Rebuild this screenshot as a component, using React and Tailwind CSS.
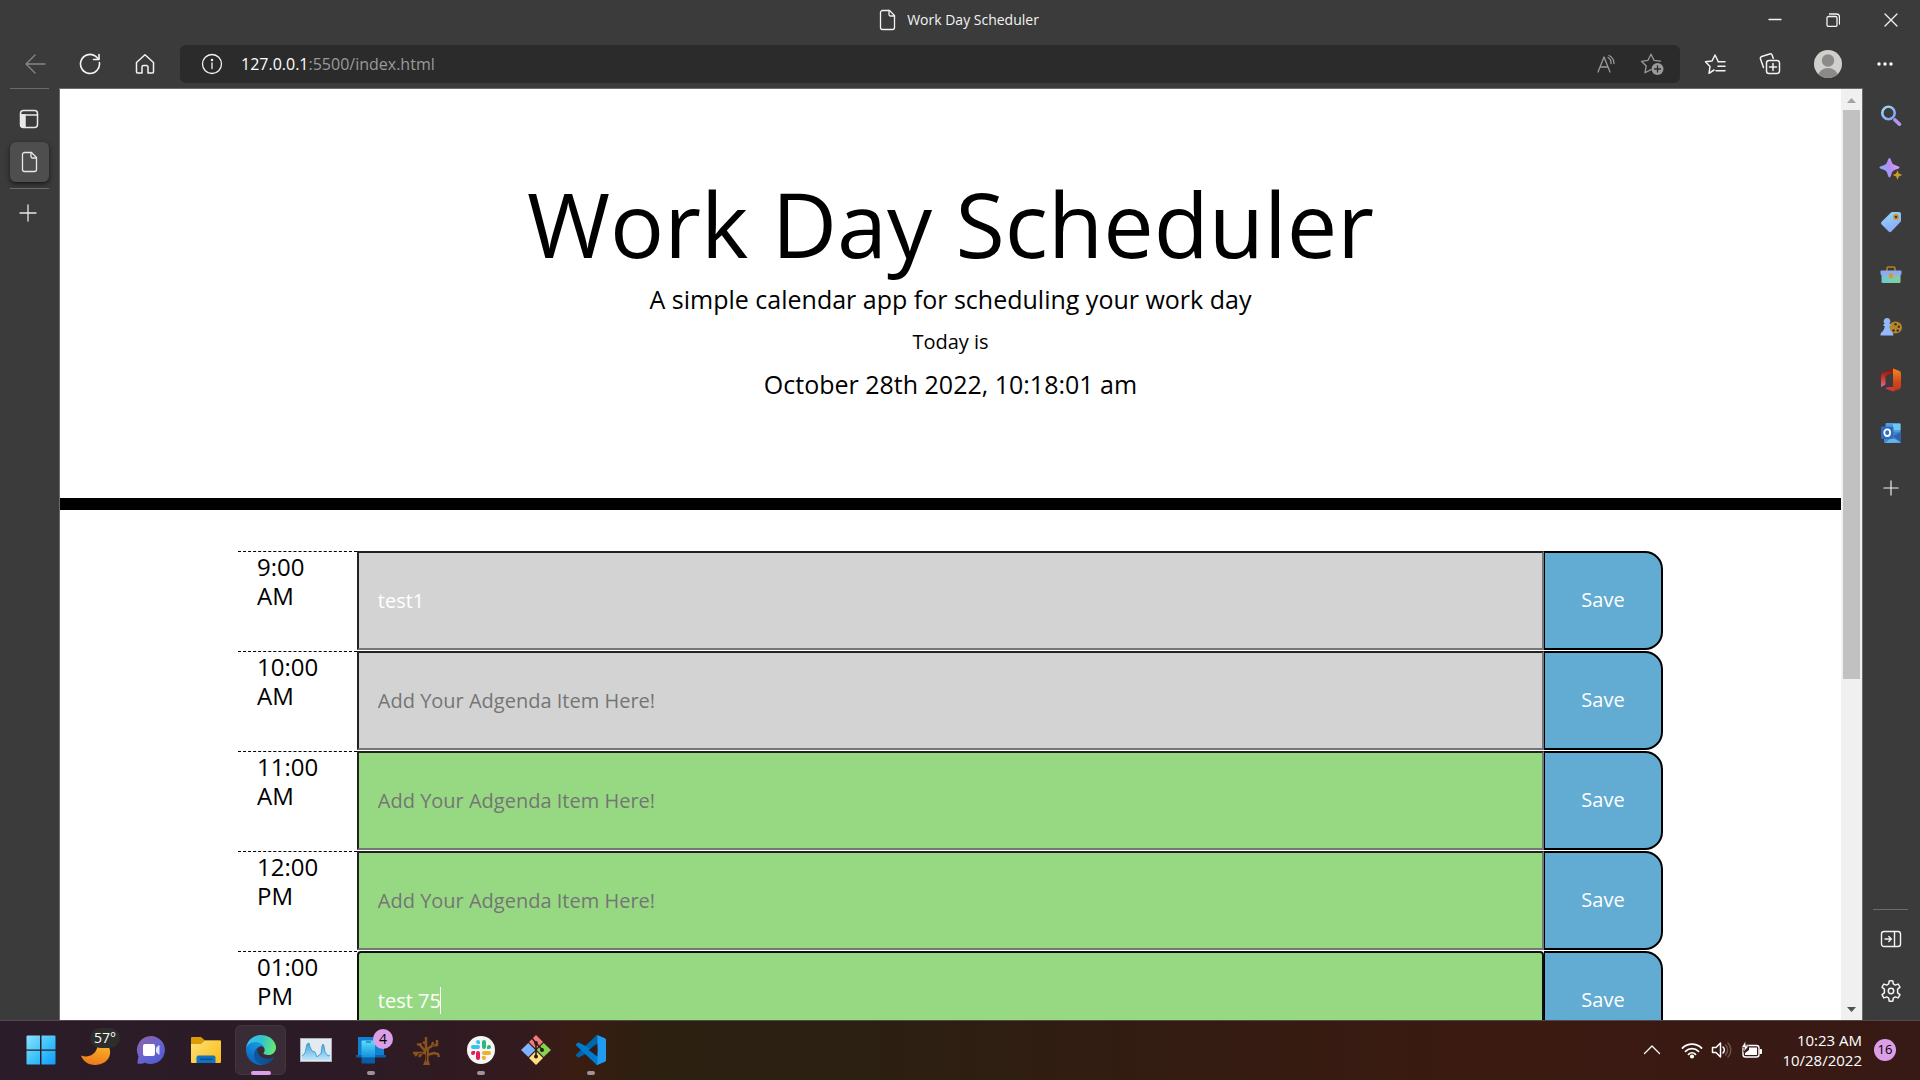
import React from "react";

/* ---------- browser chrome icons ---------- */

const Line = ({ size = 22, className = "", children, sw = 1.3, box }) => (
  <svg
    width={size}
    height={size}
    viewBox={box || `0 0 ${size} ${size}`}
    fill="none"
    stroke="currentColor"
    strokeWidth={sw}
    strokeLinecap="round"
    strokeLinejoin="round"
    className={"shrink-0 " + className}
    aria-hidden="true"
  >
    {children}
  </svg>
);

const PageIcon = () => (
  <Line size={22}>
    <path d="M5.5 1.5h7l5 5v12a2 2 0 0 1-2 2h-10a2 2 0 0 1-2-2v-15a2 2 0 0 1 2-2z" />
    <path d="M12 1.5v4a1.5 1.5 0 0 0 1.500 1.500h4" />
  </Line>
);
const BackIcon = () => (
  <Line size={22}>
    <path d="M21 11H2M11 2 2 11l9 9" />
  </Line>
);
const ReloadIcon = () => (
  <Line size={22} sw={1.6}>
    <path d="M20.400 9.500A9.500 9.500 0 1 1 16.500 3.200L19.500 6" />
    <path d="M20 1.500V6.500H14.500" />
  </Line>
);
const HomeIcon = () => (
  <Line size={22} sw={1.5}>
    <path d="M2.500 9.500 11 1.800l8.500 7.700v9.500a1 1 0 0 1-1 1h-4.500v-6a1.500 1.500 0 0 0-1.500-1.500h-3A1.500 1.500 0 0 0 8 14v6H3.500a1 1 0 0 1-1-1z" />
  </Line>
);
const InfoIcon = () => (
  <Line size={22}>
    <circle cx="11" cy="11" r="9.500" />
    <path d="M11 10v5.500" />
    <circle cx="11" cy="7" r=".6" fill="currentColor" />
  </Line>
);
const ReadAloudIcon = () => (
  <Line size={22}>
    <path d="M2 19 8 4l6 15M4 14h8M12 4.500a6 6 0 0 1 3 6M13 2.500a9 9 0 0 1 5 8" />
  </Line>
);
const AddFavIcon = () => (
  <Line size={24} box="0 0 24 24">
    <path d="M11 17.600 5 20.800 6.200 14 1.500 9.300 8 8.300 11 2.200 14 8.300 20.500 9.200" />
    <circle cx="17.500" cy="17" r="6" fill="currentColor" stroke="none" />
    <path d="M17.500 14v6M14.500 17h6" stroke="#2b2b2b" />
  </Line>
);
const FavsIcon = () => (
  <Line size={22} sw={1.5}>
    <path d="M10 17 5 20.300 6 13.500 1.500 8.800 8 8 11 2l3 6M14 8.800h7M14 13.300h7M12 17.800h9" />
  </Line>
);
const CollectionsIcon = () => (
  <Line size={22} sw={1.5}>
    <path d="M4.500 14.500 1.500 6a2 2 0 0 1 1.200-2.500l8-2.500a2 2 0 0 1 2.500 1.200l1 3" />
    <rect x="7.500" y="7.500" width="13" height="13" rx="2.500" />
    <path d="M14 10.500v7M10.500 14h7" />
  </Line>
);
const DotsIcon = () => (
  <svg width="18" height="6" viewBox="0 0 18 6" fill="#fff" aria-hidden="true">
    <circle cx="3" cy="3" r="1.700" />
    <circle cx="9" cy="3" r="1.700" />
    <circle cx="15" cy="3" r="1.700" />
  </svg>
);
const AvatarIcon = () => (
  <svg width="28" height="28" viewBox="0 0 28 28" aria-hidden="true">
    <clipPath id="avatarClip">
      <circle cx="14" cy="14" r="14" />
    </clipPath>
    <g clipPath="url(#avatarClip)">
      <rect width="28" height="28" fill="#d0cfcb" />
      <circle cx="14" cy="10.500" r="6.200" fill="#8b8a88" />
      <ellipse cx="14" cy="26.500" rx="10" ry="8.500" fill="#8b8a88" />
    </g>
  </svg>
);
const TabsPaneIcon = () => (
  <Line size={20} sw={1.5}>
    <rect x="1.500" y="1.500" width="17" height="17" rx="3" />
    <path d="M1.500 6h17" />
    <path d="M2 6h4v12H4a2 2 0 0 1-2-2z" fill="currentColor" />
  </Line>
);
const PlusIcon = ({ size = 18 }) => (
  <Line size={size} box="0 0 18 18">
    <path d="M9 1v16M1 9h16" />
  </Line>
);

/* ---------- right sidebar icons ---------- */

const SearchIcon = () => (
  <svg width="22" height="22" viewBox="0 0 22 22" fill="none" aria-hidden="true">
    <defs>
      <linearGradient id="lens" x1="1" y1="1" x2="14" y2="14" gradientUnits="userSpaceOnUse">
        <stop stopColor="#9fe0f6" />
        <stop offset="1" stopColor="#7fa0f5" />
      </linearGradient>
    </defs>
    <path d="m15 15 4.500 4.200" stroke="#b693ee" strokeWidth="3.600" strokeLinecap="round" />
    <circle cx="8.500" cy="8" r="6.200" stroke="url(#lens)" strokeWidth="2.600" />
  </svg>
);
const SparkleIcon = () => (
  <svg width="24" height="24" viewBox="0 0 24 24" aria-hidden="true">
    <defs>
      <linearGradient id="spark" x1="1" y1="12" x2="20" y2="6" gradientUnits="userSpaceOnUse">
        <stop stopColor="#7fb0f8" />
        <stop offset=".5" stopColor="#b48df2" />
        <stop offset="1" stopColor="#d7a4f5" />
      </linearGradient>
    </defs>
    <path d="M10.500 1c1.500 0 1.800 4.500 3.500 6s6.500 2 6.500 3.500-4.800 1.800-6.500 3.500-2 6.500-3.500 6.500-1.800-4.800-3.500-6.500S.5 12 .5 10.500 5.300 8.700 7 7s2-6 3.500-6z" fill="url(#spark)" />
    <path d="M18.500 13.500c.6 0 .7 2.400 1.400 3.100s3.100.8 3.100 1.400-2.400.7-3.100 1.400-.8 3.100-1.400 3.100-.7-2.400-1.400-3.100-3.100-.8-3.100-1.400 2.400-.7 3.100-1.400.8-3.100 1.400-3.100z" fill="#cf9c22" />
  </svg>
);
const TagIcon = () => (
  <svg width="22" height="22" viewBox="0 0 22 22" aria-hidden="true">
    <defs>
      <linearGradient id="tag" x1="4" y1="2" x2="12" y2="20" gradientUnits="userSpaceOnUse">
        <stop stopColor="#93d8f5" />
        <stop offset="1" stopColor="#8ca8fb" />
      </linearGradient>
    </defs>
    <path d="M12.500 1H19a2 2 0 0 1 2 2v6.500a2 2 0 0 1-.6 1.500l-9 9.500a2 2 0 0 1-2.800 0l-7-7a2 2 0 0 1 0-2.800L11 1.600a2 2 0 0 1 1.500-.6z" fill="url(#tag)" />
    <circle cx="16" cy="6" r="2.100" fill="#3b3b3b" stroke="#cf9320" strokeWidth="1.600" />
  </svg>
);
const ToolboxIcon = () => (
  <svg width="22" height="22" viewBox="0 0 22 22" aria-hidden="true">
    <defs>
      <linearGradient id="toolbox" x1="1" y1="12" x2="21" y2="14" gradientUnits="userSpaceOnUse">
        <stop stopColor="#6cc6d4" />
        <stop offset="1" stopColor="#86cf9b" />
      </linearGradient>
    </defs>
    <path d="M7 7V4.500A1.500 1.500 0 0 1 8.500 3h5A1.500 1.500 0 0 1 15 4.500V7" fill="none" stroke="#b5801e" strokeWidth="1.600" />
    <rect x="1.500" y="9" width="19" height="10" rx="1" fill="url(#toolbox)" />
    <path d="M1 6.500h20a.5.5 0 0 1 .5.5v2.500a2 2 0 0 1-2 2h-17a2 2 0 0 1-2-2V7a.5.5 0 0 1 .5-.5z" fill="#8fa9f3" />
    <path d="M9 9.500h4v3a2 2 0 0 1-4 0z" fill="#d49d2a" />
  </svg>
);
const GamesIcon = () => (
  <svg width="22" height="22" viewBox="0 0 22 22" aria-hidden="true">
    <ellipse cx="15.500" cy="11.500" rx="6.500" ry="6" fill="#b5862a" />
    <g fill="#3a3226">
      <circle cx="15.500" cy="8.300" r="1.200" />
      <circle cx="18.800" cy="10.800" r="1.200" />
      <circle cx="17.700" cy="14.500" r="1.200" />
      <circle cx="13.500" cy="14.500" r="1.200" />
    </g>
    <path d="M7 2a3.400 3.400 0 0 1 2.200 6h1.300v2H9.300c.2 2.600 1 4.500 3 6.300.8.700 1 1.500 1 3.200H.5c0-1.700.2-2.500 1.200-3.200 2-1.500 2.800-3.700 3-6.300H3.500V8h1.300A3.400 3.400 0 0 1 7 2z" fill="#95b8fb" />
  </svg>
);
const OfficeIcon = () => (
  <svg width="22" height="24" viewBox="0 0 22 24" aria-hidden="true">
    <defs>
      <linearGradient id="offL" x1="3" y1="2" x2="3" y2="20" gradientUnits="userSpaceOnUse">
        <stop stopColor="#97130e" />
        <stop offset=".6" stopColor="#d8463e" />
        <stop offset="1" stopColor="#dd75c3" />
      </linearGradient>
      <linearGradient id="offR" x1="17" y1="1" x2="17" y2="23" gradientUnits="userSpaceOnUse">
        <stop stopColor="#ee8a1c" />
        <stop offset=".6" stopColor="#d3461c" />
        <stop offset="1" stopColor="#b83a1a" />
      </linearGradient>
    </defs>
    <path d="M13.500.5 3 4.500Q1 5.300 1 7.500V19l4.500-2.500V8.500q0-1 1-1.500l7-2.500z" fill="url(#offL)" />
    <path d="m13 .5 6 2.300Q21 3.500 21 5.500v13q0 2-2 2.700l-6 2.300z" fill="url(#offR)" />
    <path d="m5 20.500 3-1.500h5.500v4.600z" fill="#d9363c" />
  </svg>
);
const OutlookIcon = () => (
  <svg width="22" height="22" viewBox="0 0 22 22" aria-hidden="true">
    <rect x="5.500" y="1" width="15" height="13" rx="1" fill="#4f9fe0" />
    <path d="M13 2h7.500v6H13z" fill="#72c4f2" />
    <path d="M4 10h17v10a1 1 0 0 1-1 1H5a1 1 0 0 1-1-1z" fill="#3f86d0" />
    <path d="m13 14 8-4v10.500z" fill="#2f62a8" />
    <path d="M5 21 21 20.500 12 15.500z" fill="#65b6ea" />
    <rect x="1" y="4.500" width="12.500" height="12.500" rx="1.300" fill="#2f6cc0" />
    <ellipse cx="7.200" cy="10.700" rx="2.900" ry="3.300" fill="none" stroke="#fff" strokeWidth="1.800" />
  </svg>
);
const HidePaneIcon = () => (
  <Line size={22} sw={1.400}>
    <rect x="1.500" y="3.500" width="19" height="15" rx="2.500" />
    <path d="M14.500 3.500v15M5 11h6M8.800 8.500 11.300 11l-2.500 2.500" />
  </Line>
);
const GearIcon = () => (
  <Line size={24} sw={1.500} box="0 0 24 24">
    <path d="M9.700 4.900 10.200 2q1.800-.4 3.600 0l.5 2.900 2 1.200 2.700-1q1.300 1.400 1.900 3.200l-2.300 1.900v3.600l2.300 1.900q-.6 1.800-1.900 3.200l-2.700-1-2 1.200-.5 2.900q-1.800.4-3.600 0l-.5-2.900-2-1.200-2.700 1q-1.300-1.400-1.900-3.200l2.300-1.900v-3.600L3.100 8.300Q3.700 6.500 5 5.100l2.700 1z" />
    <circle cx="12" cy="12" r="2.700" />
  </Line>
);

/* ---------- taskbar icons ---------- */

const WindowsIcon = () => (
  <svg width="30" height="30" viewBox="0 0 30 30" aria-hidden="true">
    <defs>
      <linearGradient id="win" x1="0" y1="0" x2="30" y2="30" gradientUnits="userSpaceOnUse">
        <stop stopColor="#8fe3fd" />
        <stop offset=".5" stopColor="#41c4fb" />
        <stop offset="1" stopColor="#0c9bfa" />
      </linearGradient>
    </defs>
    <path d="M1.500.5H14v14H.5v-13a1 1 0 0 1 1-1zM15.500.5h13a1 1 0 0 1 1 1v13h-14zM.5 15.800H14v13.700H1.500a1 1 0 0 1-1-1zM15.500 15.800h14v12.700a1 1 0 0 1-1 1h-13z" fill="url(#win)" />
  </svg>
);
const MoonIcon = () => (
  <svg width="32" height="32" viewBox="0 0 32 32" aria-hidden="true">
    <defs>
      <linearGradient id="moon" x1="18" y1="8" x2="14" y2="31" gradientUnits="userSpaceOnUse">
        <stop stopColor="#fbb829" />
        <stop offset="1" stopColor="#ec7a1c" />
      </linearGradient>
    </defs>
    <path d="M1 21.500C11 25 19 18 18 6c9 2 13 8 12 14-1 7-8 11-15 11C8 31 3 27 1 21.500z" fill="url(#moon)" />
  </svg>
);
const ChatIcon = () => (
  <svg width="30" height="30" viewBox="0 0 30 30" aria-hidden="true">
    <defs>
      <linearGradient id="chat" x1="4" y1="3" x2="24" y2="28" gradientUnits="userSpaceOnUse">
        <stop stopColor="#8b62a8" />
        <stop offset=".5" stopColor="#6a64cf" />
        <stop offset="1" stopColor="#4f5bd5" />
      </linearGradient>
    </defs>
    <path d="M15 1a14 14 0 1 1-6 26.700c-2 1-5 1.300-7.500.8C1.500 26 2 24 2.500 21.500A14 14 0 0 1 15 1z" fill="url(#chat)" />
    <rect x="7" y="9" width="12" height="12" rx="2" fill="#fff" />
    <path d="m20 13 2.500-2.500q1-.6 1 .5v8q0 1-1 .5L20 17z" fill="#dde3ff" />
  </svg>
);
const FolderIcon = () => (
  <svg width="32" height="28" viewBox="0 0 32 28" aria-hidden="true">
    <defs>
      <linearGradient id="fold" x1="4" y1="6" x2="26" y2="27" gradientUnits="userSpaceOnUse">
        <stop stopColor="#fddd70" />
        <stop offset="1" stopColor="#fbbf20" />
      </linearGradient>
    </defs>
    <path d="M1 2a1 1 0 0 1 1-1h9l4 3.500h15a1 1 0 0 1 1 1V12H1z" fill="#dd9a08" />
    <path d="M1 8h10l4-3.500h15a1 1 0 0 1 1 1V26a1 1 0 0 1-1 1H2a1 1 0 0 1-1-1z" fill="url(#fold)" />
    <path d="M6.500 27v-5.500a2 2 0 0 1 2-2h15a2 2 0 0 1 2 2V27z" fill="#0e73c4" />
    <path d="M10 23.200h12.500" stroke="#063f7b" />
  </svg>
);
const EdgeIcon = () => (
  <svg width="30" height="30" viewBox="0 0 256 256" aria-hidden="true">
    <defs>
      <linearGradient id="edgeA" x1="60" y1="180" x2="240" y2="180" gradientUnits="userSpaceOnUse">
        <stop stopColor="#0c59a4" />
        <stop offset="1" stopColor="#114a8b" />
      </linearGradient>
      <linearGradient id="edgeB" x1="150" y1="70" x2="45" y2="230" gradientUnits="userSpaceOnUse">
        <stop stopColor="#1b9de2" />
        <stop offset=".5" stopColor="#1484d6" />
        <stop offset="1" stopColor="#0a65b8" />
      </linearGradient>
      <linearGradient id="edgeC" x1="20" y1="60" x2="250" y2="110" gradientUnits="userSpaceOnUse">
        <stop stopColor="#35c1f1" />
        <stop offset=".45" stopColor="#2fc2cf" />
        <stop offset="1" stopColor="#66eb6e" />
      </linearGradient>
    </defs>
    <path fill="url(#edgeA)" d="M231 190.500c-3.400 1.800-6.900 3.400-10.500 4.700-11.500 4.300-23.600 6.500-35.900 6.500-47.300 0-88.500-32.500-88.500-74.300.1-11.400 6.400-21.900 16.400-27.300-42.800 1.800-53.800 46.400-53.800 72.500 0 73.900 68.100 81.400 82.800 81.400 7.900 0 19.800-2.300 27-4.600l1.300-.4c27.600-9.500 51-28.100 66.600-52.800 1.200-1.900.6-4.300-1.200-5.500-1.300-.8-2.900-.9-4.200-.2z" />
    <path fill="url(#edgeB)" d="M105.700 241.400c-8.900-5.500-16.600-12.800-22.700-21.300-26.300-36-18.400-86.500 17.600-112.800 3.800-2.700 7.700-5.200 11.900-7.200 3.100-1.500 8.400-4.100 15.500-4 10.100.1 19.600 4.900 25.700 13 4 5.400 6.300 11.900 6.400 18.700 0-.2 24.500-79.600-80-79.600-43.900 0-80 41.700-80 78.200-.2 19.300 4 38.500 12.100 56 27.600 58.800 94.800 87.600 156.400 67.100-21.100 6.600-44.100 3.700-62.900-8.100z" />
    <path fill="url(#edgeC)" d="M152.300 148.900c-.8 1-3.300 2.500-3.300 5.700 0 2.600 1.700 5.100 4.700 7.200 14.400 10 41.500 8.700 41.600 8.700 10.700 0 21.100-2.900 30.300-8.300 18.800-11 30.400-31.100 30.400-52.900.3-22.400-8-37.300-11.300-43.900C223.500 23.900 177.700 0 128 0 58 0 1 56.200 0 126.200c.5-36.500 36.800-66 80-66 3.500 0 23.500.3 42 10.100 16.300 8.600 24.900 18.900 30.800 29.200 6.200 10.700 7.300 24.100 7.300 29.500 0 5.300-2.700 13.300-7.800 19.900z" />
  </svg>
);
const MonitorIcon = () => (
  <svg width="32" height="24" viewBox="0 0 32 24" aria-hidden="true">
    <defs>
      <linearGradient id="mon" x1="0" y1="6" x2="0" y2="22" gradientUnits="userSpaceOnUse">
        <stop stopColor="#4aa6dc" />
        <stop offset="1" stopColor="#bfe5f8" />
      </linearGradient>
    </defs>
    <rect x=".5" y=".5" width="31" height="23" fill="#e3ebf1" stroke="#a9b1b8" />
    <path d="M2 22v-4l3-3 2-9 2-1 1 4 2 4 3 1 2 5 2-2 2-1 1-8 1-2 1 2 1 6 3 4 2-1v5z" fill="url(#mon)" />
    <path d="m2 18 3-3 2-9 2-1 1 4 2 4 3 1 2 5 2-2 2-1 1-8 1-2 1 2 1 6 3 4 2-1" fill="none" stroke="#3a9bd4" strokeWidth=".9" />
  </svg>
);
const PhoneLinkIcon = () => (
  <svg width="30" height="28" viewBox="0 0 30 28" aria-hidden="true">
    <defs>
      <linearGradient id="ph" x1="0" y1="4" x2="0" y2="28" gradientUnits="userSpaceOnUse">
        <stop stopColor="#5fe0fb" />
        <stop offset=".7" stopColor="#1493e0" />
        <stop offset=".75" stopColor="#0b5ba8" />
      </linearGradient>
    </defs>
    <path d="M2 1h26v18H2z" fill="#1180cf" />
    <path d="M0 19h30v1.500a1 1 0 0 1-1 1H1a1 1 0 0 1-1-1z" fill="#0b5fae" />
    <rect x="5.500" y="4.500" width="13.500" height="23" rx="1" fill="url(#ph)" />
    <path d="M10 6h5" stroke="#0b5ba8" />
  </svg>
);
const TreeIcon = () => (
  <svg width="28" height="30" viewBox="0 0 28 30" fill="none" stroke="#8a531c" aria-hidden="true">
    <path d="M14 17 8.500 10.500 5 9M8.500 10.500 8.500 8M14 18H1M6 18 3 21M10 18 7 22M15 20l7-2 4 1 1 3M15 14l5-3 5-1V5M20 11l1-4M14 14V2M14 9l-3-2" strokeWidth="2.400" />
    <path d="M11 30h7l-1.500-5 .5-12h-4l.5 11z" fill="#8a531c" stroke="none" />
    <path d="M14.500 27V16M11 18.500H6M20 11h3" stroke="#4f2e10" />
  </svg>
);
const SlackIcon = () => (
  <svg width="28" height="28" viewBox="-14 -14 28 28" aria-hidden="true">
    <circle r="14" fill="#f6f6f6" />
    <g fill="#36c5f0">
      <rect x="-10" y="-5" width="9" height="4" rx="2" />
      <path d="M-1-6h-2a2 2 0 1 1 2-2z" />
    </g>
    <g fill="#2eb67d">
      <rect x="1" y="-10" width="4" height="9" rx="2" />
      <path d="M6-1v-2a2 2 0 1 1 2 2z" />
    </g>
    <g fill="#e01e5a">
      <rect x="-5" y="1" width="4" height="9" rx="2" />
      <path d="M-6 1v2a2 2 0 1 1-2-2z" />
    </g>
    <g fill="#ecb22e">
      <rect x="1" y="1" width="9" height="4" rx="2" />
      <path d="M1 6h2a2 2 0 1 1-2 2z" />
    </g>
  </svg>
);
const GitIcon = () => (
  <svg width="30" height="30" viewBox="0 0 30 30" aria-hidden="true">
    <path d="m15 0 7 7-7 7-7-7z" fill="#f37c77" />
    <path d="m7.300 8 7 7-7 7-7.300-7z" fill="#80b3ff" />
    <path d="m22.700 8 7.300 7-7.300 7-7-7z" fill="#86d34f" />
    <path d="m15 16 7 7-7 7-7-7z" fill="#ffe27f" />
    <path d="m10 2 5 6v14M15 8l6 6.500" fill="none" stroke="#2b1a1c" strokeWidth="1.600" />
    <g fill="#2b1a1c">
      <circle cx="15" cy="8" r="1.900" />
      <circle cx="21" cy="15" r="2" />
      <circle cx="15" cy="21.500" r="2" />
    </g>
  </svg>
);
const CodeIcon = () => (
  <svg width="30" height="30" viewBox="0 0 30 30" aria-hidden="true">
    <path d="M21.500.3 29 3.800a1.700 1.700 0 0 1 1 1.600v3L3.200 22.200a1.200 1.200 0 0 1-1.500 0L.4 21a1.200 1.200 0 0 1 0-1.800L20 .7z" fill="#0065a9" />
    <path d="M21.500 29.700 29 26.200a1.700 1.700 0 0 0 1-1.600v-3L3.200 7.800a1.200 1.200 0 0 0-1.500 0L.4 9a1.200 1.200 0 0 0 0 1.800L20 29.300z" fill="#007acc" />
    <path d="M21.600 29.800a1.900 1.900 0 0 1-2.100-.4c.7.7 1.900.2 1.900-.8V1.400c0-1-1.200-1.500-1.900-.8a1.900 1.900 0 0 1 2.100-.4L29 3.200a1.700 1.700 0 0 1 1 1.600v20.400a1.700 1.700 0 0 1-1 1.600z" fill="#1f9cf0" />
    <path d="M21.400 8.500v13L12.600 15z" fill="#321a1b" />
  </svg>
);
const WifiIcon = () => (
  <svg width="22" height="18" viewBox="0 0 22 18" fill="none" stroke="#fff" strokeWidth="1.800" strokeLinecap="round" aria-hidden="true">
    <path d="M1.500 7a13.500 13.500 0 0 1 19 0M4.500 10.300a9.200 9.200 0 0 1 13 0M7.500 13.300a5 5 0 0 1 7 0" />
    <circle cx="11" cy="15.500" r="1.200" fill="#fff" />
  </svg>
);
const VolumeIcon = () => (
  <svg width="22" height="18" viewBox="0 0 22 18" fill="none" stroke="#fff" strokeWidth="1.500" strokeLinejoin="round" strokeLinecap="round" aria-hidden="true">
    <path d="M1.500 6.500H5L9.500 2v14L5 11.500H1.500zM12 6a4 4 0 0 1 0 6" />
    <path d="M14.500 4a7 7 0 0 1 0 10M17 2a10 10 0 0 1 0 14" stroke="#6d524c" />
  </svg>
);
const BatteryIcon = () => (
  <svg width="22" height="18" viewBox="0 0 22 18" aria-hidden="true">
    <rect x="2" y="4.500" width="16" height="11.500" rx="2.500" fill="none" stroke="#fff" strokeWidth="1.400" />
    <path d="M8 6.500h8v7.500H4v-2l4-3z" fill="#fff" />
    <path d="M19 8.500h1.500v4H19z" fill="#fff" stroke="#fff" />
    <path d="M4.500 0 .5 6.500h3L2.500 11 8 5H4.800z" fill="#fff" stroke="#3a1912" strokeWidth=".6" />
  </svg>
);

/* ---------- data ---------- */

const slots = [
  { time: "9:00 AM", tone: "past", value: "test1" },
  { time: "10:00 AM", tone: "past", value: "" },
  { time: "11:00 AM", tone: "future", value: "" },
  { time: "12:00 PM", tone: "future", value: "" },
  { time: "01:00 PM", tone: "future", value: "test 75", focused: true },
];

const sidebarApps = [
  ["Search", SearchIcon],
  ["Discover", SparkleIcon],
  ["Shopping", TagIcon],
  ["Tools", ToolboxIcon],
  ["Games", GamesIcon],
  ["Office", OfficeIcon],
  ["Outlook", OutlookIcon],
];

const taskbarApps = [
  { name: "Start", Icon: WindowsIcon },
  { name: "Weather", Icon: MoonIcon, weather: "57°" },
  { name: "Chat", Icon: ChatIcon },
  { name: "File Explorer", Icon: FolderIcon },
  { name: "Edge", Icon: EdgeIcon, active: true },
  { name: "Monitor", Icon: MonitorIcon },
  { name: "Phone Link", Icon: PhoneLinkIcon, badge: "4", running: true },
  { name: "Tree", Icon: TreeIcon },
  { name: "Slack", Icon: SlackIcon, running: true },
  { name: "Git Bash", Icon: GitIcon },
  { name: "Code", Icon: CodeIcon, running: true },
];

/* ---------- sections ---------- */

const IconButton = ({ label, className = "", children }) => (
  <button type="button" aria-label={label} className={"flex shrink-0 items-center justify-center " + className}>
    {children}
  </button>
);

function TitleBar() {
  return (
    <div className="grid h-10 shrink-0 grid-cols-[1fr_auto_1fr] items-center text-[#f3f3f3]">
      <span />
      <div className="flex items-center gap-2 pr-1 text-sm">
        <PageIcon />
        <span>Work Day Scheduler</span>
      </div>
      <div className="flex justify-end">
        <IconButton label="Minimize" className="h-10 w-[58px]">
          <Line size={14}><path d="M1 6.500h12" /></Line>
        </IconButton>
        <IconButton label="Restore" className="h-10 w-[58px]">
          <Line size={14}>
            <rect x="1" y="3.500" width="10" height="10" rx="1.500" />
            <path d="M3.500 1h7a3 3 0 0 1 3 3v7" />
          </Line>
        </IconButton>
        <IconButton label="Close" className="h-10 w-[58px]">
          <Line size={14}><path d="m1 1 12 12M13 1 1 13" /></Line>
        </IconButton>
      </div>
    </div>
  );
}

function Toolbar() {
  return (
    <div className="flex h-12 shrink-0 items-center pl-[7px] text-[#f3f3f3]">
      <IconButton label="Back" className="w-[55px] text-[#868686]"><BackIcon /></IconButton>
      <IconButton label="Refresh" className="w-[55px]"><ReloadIcon /></IconButton>
      <IconButton label="Home" className="w-[55px]"><HomeIcon /></IconButton>
      <div className="ml-2 flex h-[38px] min-w-0 flex-1 items-center rounded-md bg-[#2b2b2b] pr-4 pl-[21px]">
        <IconButton label="Site information"><InfoIcon /></IconButton>
        <div className="ml-[18px] flex min-w-0 flex-1 items-center text-base">
          <input aria-label="Address" defaultValue="127.0.0.1" className="field-sizing-content bg-transparent text-white outline-none" />
          <span className="text-[#9a9a9a]">:5500/index.html</span>
        </div>
        <div className="flex items-center gap-[22px] text-[#9a9a9a]">
          <IconButton label="Read aloud"><ReadAloudIcon /></IconButton>
          <IconButton label="Add to favorites"><AddFavIcon /></IconButton>
        </div>
      </div>
      <div className="flex pr-2 pl-2">
        <IconButton label="Favorites" className="w-[54px]"><FavsIcon /></IconButton>
        <IconButton label="Collections" className="w-[55px]"><CollectionsIcon /></IconButton>
        <IconButton label="Profile" className="w-[61px]"><AvatarIcon /></IconButton>
        <IconButton label="Settings and more" className="w-[54px]"><DotsIcon /></IconButton>
      </div>
    </div>
  );
}

function TabRail() {
  return (
    <nav aria-label="Tabs" className="flex w-[59px] shrink-0 flex-col items-start pl-[10px] text-[#e8e8e8]">
      <div className="h-px w-[39px] bg-[#6b6b6b]" />
      <IconButton label="Tab actions" className="mt-[11px] h-[38px] w-[38px]"><TabsPaneIcon /></IconButton>
      <IconButton label="Work Day Scheduler tab" className="mt-1 h-10 w-[39px] rounded-md bg-[#4e4e4e] shadow-[0_2px_5px_rgba(0,0,0,0.6)]"><PageIcon /></IconButton>
      <div className="mt-[6px] h-px w-[39px] bg-[#6b6b6b]" />
      <IconButton label="New tab" className="mt-1 h-10 w-9"><PlusIcon /></IconButton>
    </nav>
  );
}

function SideBar() {
  return (
    <aside aria-label="Sidebar" className="flex w-[57px] shrink-0 flex-col pt-[2px] pr-[2px] text-[#f3f3f3]">
      <div className="flex h-[369px] flex-col">
        {sidebarApps.map(([name, Icon]) => (
          <IconButton key={name} label={name} className="flex-1"><Icon /></IconButton>
        ))}
      </div>
      <IconButton label="Customize" className="h-[58px]"><PlusIcon size={16} /></IconButton>
      <div className="mt-auto h-px w-[35px] self-center bg-[#6b6b6b]" />
      <IconButton label="Hide sidebar" className="mt-[3px] h-[52px]"><HidePaneIcon /></IconButton>
      <IconButton label="Settings" className="mb-[3px] h-[52px]"><GearIcon /></IconButton>
    </aside>
  );
}

function Slot({ slot }) {
  const tone = slot.tone === "past" ? "bg-[#d3d3d3]" : "bg-[#97d983]";
  const edge = slot.focused
    ? "rounded-sm border-[#101010]"
    : "border-t-[#222222] border-l-[#222222] border-r-[#767676] border-b-[#767676]";
  const id = "slot-" + slot.time.replace(/\W/g, "");
  return (
    <form className="grid h-[100px] grid-cols-12">
      <label htmlFor={id} className="border-t border-dashed border-black px-[19px] text-2xl leading-[29px]">
        {slot.time}
      </label>
      <div className="relative col-span-10 h-[99px]">
        <input
          id={id}
          defaultValue={slot.value}
          placeholder="Add Your Adgenda Item Here!"
          className={"size-full border-2 px-[19px] text-xl text-white outline-none placeholder:text-[#757575] " + tone + " " + edge}
        />
        {slot.focused && <span className="absolute top-9 left-[83px] h-[27px] w-px bg-white" />}
      </div>
      <button type="button" className="h-[99px] rounded-r-[18px] border-2 border-l border-black bg-[#62abd2] pb-[2px] text-xl text-white">
        Save
      </button>
    </form>
  );
}

function Scheduler() {
  return (
    <main className="min-w-0 flex-1 overflow-hidden bg-white text-black">
      <header className="border-b-12 border-black px-10 pt-20 pb-[94px] text-center">
        <h1 className="text-[90px] leading-[108px]">Work Day Scheduler</h1>
        <p className="mt-[3px] text-[25px] leading-[38px]">A simple calendar app for scheduling your work day</p>
        <p className="mt-[9px] text-xl leading-[30px]">Today is</p>
        <p className="mt-2 mb-px text-[25px] leading-[38px]">October 28th 2022, 10:18:01 am</p>
      </header>
      <div className="mx-auto mt-[41px] w-4/5">
        {slots.map((slot) => (
          <Slot key={slot.time} slot={slot} />
        ))}
      </div>
    </main>
  );
}

function ScrollBar() {
  return (
    <div className="flex w-[21px] shrink-0 flex-col items-center bg-[#f0f0f0]">
      <svg width="21" height="21" viewBox="0 0 21 21" aria-hidden="true"><path d="M6 14h9l-4.500-5z" fill="#a3a3a3" /></svg>
      <div className="flex w-[17px] flex-1 flex-col">
        <div className="h-[64%] bg-[#c1c1c1]" />
      </div>
      <svg width="21" height="21" viewBox="0 0 21 21" aria-hidden="true"><path d="M6 8h9l-4.500 5z" fill="#505050" /></svg>
    </div>
  );
}

function TaskItem({ item }) {
  const { name, Icon, active, running, badge, weather } = item;
  return (
    <button
      type="button"
      aria-label={name}
      className={"relative mx-[2px] flex h-[50px] w-[51px] items-center justify-center rounded-md border " + (active ? "border-[#43343f] bg-[#3a2c37]" : "border-transparent")}
    >
      <Icon />
      {weather && <span className="absolute top-[2px] left-[19px] rounded-full bg-[#2d2d2c] px-1 text-sm leading-5 text-white">{weather}</span>}
      {badge && <span className="absolute top-[3px] left-[27px] flex size-5 items-center justify-center rounded-full bg-[#dc9ee6] text-sm text-black">{badge}</span>}
      {active && <span className="absolute -bottom-px h-1 w-5 rounded-full bg-[#dc9ee6]" />}
      {running && <span className="absolute -bottom-px h-1 w-2 rounded-full bg-[#9d9398]" />}
    </button>
  );
}

function Taskbar() {
  return (
    <footer className="flex h-[60px] shrink-0 items-start border-t border-[#52484a] bg-[linear-gradient(90deg,#2a1c28_0%,#2c1b26_18%,#331a1e_27%,#3a1c12_30%,#2c2011_34%,#2b2012_44%,#331c12_60%,#3b1a11_78%,#371915_100%)] pt-1 pl-[13px] text-white">
      <div className="flex">
        {taskbarApps.map((item) => (
          <TaskItem key={item.name} item={item} />
        ))}
      </div>
      <div className="ml-auto flex h-[50px] items-center pr-6">
        <IconButton label="Show hidden icons" className="mr-5">
          <Line size={18}><path d="m1.500 12.500 7.500-7.500 7.500 7.500" /></Line>
        </IconButton>
        <div className="flex gap-2">
          <WifiIcon />
          <VolumeIcon />
          <BatteryIcon />
        </div>
        <div className="ml-[19px] text-right text-[15px] leading-5">
          <div>10:23 AM</div>
          <div>10/28/2022</div>
        </div>
        <span className="ml-3 flex size-[22px] items-center justify-center rounded-full bg-[#dc9ee6] text-[13px] text-black">16</span>
      </div>
    </footer>
  );
}

export default function App() {
  return (
    <div className="flex h-screen flex-col overflow-hidden bg-[#3b3b3b] font-['Open_Sans','Noto_Sans',sans-serif]">
      <TitleBar />
      <Toolbar />
      <div className="flex min-h-0 flex-1">
        <TabRail />
        <div className="flex min-w-0 flex-1 border border-b-0 border-[#6b6b6b]">
          <Scheduler />
          <ScrollBar />
        </div>
        <SideBar />
      </div>
      <Taskbar />
    </div>
  );
}
